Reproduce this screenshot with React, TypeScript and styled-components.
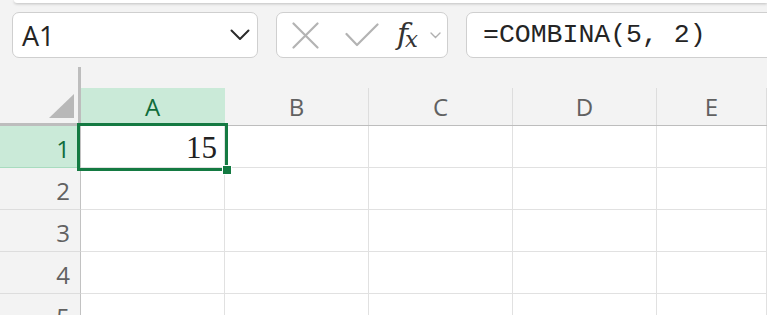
import React from "react";
import styled, { createGlobalStyle } from "styled-components";

const Global = createGlobalStyle`
  html, body { margin: 0; padding: 0; background: #f3f3f3; }
  body { overflow: hidden; }
  * { box-sizing: border-box; }
`;

const Page = styled.div`
  width: 767px;
  height: 315px;
  overflow: hidden;
  background: #f3f3f3;
  font-family: "Open Sans", "Noto Sans", sans-serif;
`;

const Ribbon = styled.div`
  height: 3px;
  margin-left: 14px;
  background: #ffffff;
  border-bottom-left-radius: 8px;
  box-shadow: 0 1px 3px rgba(0, 0, 0, 0.22);
`;

const Toolbar = styled.div`
  display: flex;
  align-items: stretch;
  gap: 18px;
  padding: 9px 0 0 12px;
  height: 58px;
`;

const Box = styled.div<{ $w: number }>`
  flex: 0 0 ${(p) => p.$w}px;
  height: 46px;
  background: #ffffff;
  border: 1px solid #cfcfcf;
  border-radius: 7px;
  display: flex;
  align-items: center;
`;

const NameText = styled.span`
  flex: 1;
  padding-left: 9px;
  font-size: 27px;
  color: #242424;
  line-height: 1;
`;

const Chevron = styled.svg`
  margin-right: 7px;
`;

const FxButtons = styled.div`
  display: flex;
  align-items: center;
  height: 100%;
  padding-left: 15px;
`;

const IconSlot = styled.span<{ $w: number }>`
  width: ${(p) => p.$w}px;
  display: flex;
  align-items: center;
`;

const FxLabel = styled.span`
  font-family: "DejaVu Serif", "Liberation Serif", serif;
  font-style: italic;
  font-size: 30px;
  color: #333;
  line-height: 1;
  letter-spacing: -3px;
  display: flex;
  align-items: baseline;
  margin-top: -2px;
`;

const FxX = styled.span`
  font-size: 23px;
  position: relative;
  top: 3px;
`;

const FormulaText = styled.span`
  padding-left: 16px;
  font-family: "Liberation Mono", monospace;
  font-size: 26.5px;
  color: #242424;
  white-space: nowrap;
  line-height: 1;
`;

const Sheet = styled.div`
  position: relative;
  margin-top: 6px;
  display: grid;
  grid-template-columns: 81px repeat(4, 144px) 1fr;
  grid-template-rows: 59px repeat(5, 42px);
`;

const Corner = styled.div`
  border-right: 3px solid #bdbdbd;
  border-bottom: 3px solid #bdbdbd;
  position: relative;
`;

const CornerTriangle = styled.div`
  position: absolute;
  right: 4px;
  bottom: 5px;
  width: 0;
  height: 0;
  border-left: 25px solid transparent;
  border-bottom: 24px solid #b8b8b8;
`;

const ColHead = styled.div`
  display: flex;
  align-items: flex-end;
  border-bottom: 1px solid #bdbdbd;
`;

const ColLabel = styled.div<{ $active?: boolean }>`
  flex: 1;
  height: 37px;
  display: flex;
  align-items: center;
  justify-content: center;
  font-size: 24px;
  color: ${(p) => (p.$active ? "#0f6c3a" : "#616161")};
  background: ${(p) => (p.$active ? "#caead8" : "transparent")};
  border-right: 1px solid ${(p) => (p.$active ? "#caead8" : "#dddddd")};
`;

const RowHead = styled.div<{ $active?: boolean }>`
  display: flex;
  align-items: center;
  justify-content: flex-end;
  padding: 3px 10px 0 0;
  font-size: 24px;
  color: ${(p) => (p.$active ? "#0f6c3a" : "#616161")};
  background: ${(p) => (p.$active ? "#caead8" : "transparent")};
  border-right: 1px solid #c2c2c2;
  border-bottom: 1px solid ${(p) => (p.$active ? "#a8dcbf" : "#dddddd")};
`;

const Cell = styled.div<{ $align?: string }>`
  background: #ffffff;
  border-right: 1px solid #e1e1e1;
  border-bottom: 1px solid #e1e1e1;
  display: flex;
  align-items: center;
  justify-content: ${(p) => p.$align || "flex-start"};
  padding: 2px 7px 0 0;
  font-family: "Liberation Serif", serif;
  font-size: 31px;
  color: #222;
`;

const Selection = styled.div`
  position: absolute;
  left: 77px;
  top: 56px;
  width: 151px;
  height: 48px;
  border: 3px solid #147a42;
  pointer-events: none;
`;

const FillHandle = styled.div`
  position: absolute;
  right: -7px;
  bottom: -7px;
  width: 10px;
  height: 10px;
  background: #147a42;
  border: 1px solid #ffffff;
`;

const cols = ["A", "B", "C", "D", "E"];
const rows = [1, 2, 3, 4, 5];

export default function App() {
  return (
    <Page>
      <Global />
      <Ribbon />
      <Toolbar>
        <Box $w={246}>
          <NameText>A1</NameText>
          <Chevron width="20" height="12" viewBox="0 0 20 12">
            <path d="M1.5 1.5 L10 10 L18.5 1.5" fill="none" stroke="#2b2b2b" strokeWidth="2" strokeLinecap="round" strokeLinejoin="round" />
          </Chevron>
        </Box>
        <Box $w={172}>
          <FxButtons>
            <IconSlot $w={53}>
              <svg width="27" height="27" viewBox="0 0 27 27">
                <path d="M1.5 1.5 L25.5 25.5 M25.5 1.5 L1.5 25.5" stroke="#b3b3b3" strokeWidth="2.2" strokeLinecap="round" />
              </svg>
            </IconSlot>
            <IconSlot $w={52}>
              <svg width="34" height="24" viewBox="0 0 34 24">
                <path d="M1.5 11 L12 22 L32.5 1.5" fill="none" stroke="#b3b3b3" strokeWidth="2.2" strokeLinecap="round" strokeLinejoin="round" />
              </svg>
            </IconSlot>
            <IconSlot $w={33}>
              <FxLabel>
                f<FxX>x</FxX>
              </FxLabel>
            </IconSlot>
            <svg width="11" height="7" viewBox="0 0 11 7">
              <path d="M1 1 L5.5 5.5 L10 1" fill="none" stroke="#b0b0b0" strokeWidth="1.4" strokeLinecap="round" />
            </svg>
          </FxButtons>
        </Box>
        <Box $w={340}>
          <FormulaText>=COMBINA(5, 2)</FormulaText>
        </Box>
      </Toolbar>
      <Sheet>
        <Corner>
          <CornerTriangle />
        </Corner>
        {cols.map((c, i) => (
          <ColHead key={c}>
            <ColLabel $active={i === 0}>{c}</ColLabel>
          </ColHead>
        ))}
        {rows.map((r) => (
          <React.Fragment key={r}>
            <RowHead $active={r === 1}>{r}</RowHead>
            {cols.map((c) => (
              <Cell key={c} $align={r === 1 && c === "A" ? "flex-end" : "flex-start"}>
                {r === 1 && c === "A" ? "15" : ""}
              </Cell>
            ))}
          </React.Fragment>
        ))}
        <Selection>
          <FillHandle />
        </Selection>
      </Sheet>
    </Page>
  );
}
